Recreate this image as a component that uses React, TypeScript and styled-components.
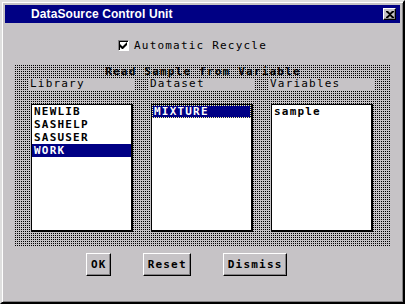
import React from 'react';
import styled, { createGlobalStyle } from 'styled-components';

const GlobalStyle = createGlobalStyle`
  body {
    margin: 0;
    background: #c6c3c6;
    font-family: "DejaVu Sans Mono", "Liberation Mono", monospace;
  }
`;

const face = '#c6c3c6';
const navy = '#000084';

// the dialog uses a bitmap mono font: ~7.8px per cell
const mono = `
  font-size: 11px;
  letter-spacing: 1.2px;
`;

const Window = styled.div`
  width: 405px;
  height: 304px;
  box-sizing: border-box;
  background: ${face};
  border: 2px solid;
  border-color: #dfdfdf #000 #000 #dfdfdf;
  box-shadow: inset 1px 1px #fff, inset -1px -1px #848284;
  padding: 3px;
  display: flex;
  flex-direction: column;
`;

const TitleBar = styled.div`
  height: 18px;
  background: ${navy};
  display: flex;
  align-items: center;
  justify-content: space-between;
  padding: 0 4px 0 26px;
`;

const Title = styled.span`
  font-family: "Liberation Sans", Arial, sans-serif;
  font-weight: bold;
  font-size: 12px;
  color: #fff;
  letter-spacing: 0.1px;
`;

const CloseButton = styled.div`
  width: 13px;
  height: 12px;
  box-sizing: border-box;
  background: ${face};
  border: 1px solid;
  border-color: #fff #000 #000 #fff;
  box-shadow: inset -1px -1px #848284;
  display: flex;
  align-items: center;
  justify-content: center;
`;

const CheckRow = styled.div`
  margin-top: 16px;
  height: 12px;
  padding-left: 113px;
  display: flex;
  align-items: center;
  gap: 5px;
`;

const CheckBox = styled.div`
  width: 11px;
  height: 11px;
  box-sizing: border-box;
  background: #fff;
  border: 1px solid;
  border-color: #848284 #fff #fff #848284;
  box-shadow: inset 1px 1px #000;
  display: flex;
  align-items: center;
  justify-content: center;
`;

const Label = styled.span`
  ${mono}
  line-height: 13px;
  color: #000;
  white-space: pre;
`;

const Group = styled.div`
  margin: 14px 0 0 10px;
  width: 376px;
  height: 182px;
  box-sizing: border-box;
  padding: 0 16px 15px 14px;
  background-color: #000;
  background-image: linear-gradient(90deg, transparent 1px, ${face} 1px),
    linear-gradient(transparent 1px, ${face} 1px);
  background-size: 2px 2px;
  display: flex;
  flex-direction: column;
`;

const GroupTitle = styled.div`
  height: 13px;
  text-align: center;
  ${mono}
  line-height: 13px;
  font-weight: bold;
  padding-left: 2px;
`;

const Columns = styled.div`
  display: flex;
  gap: 14px;
`;

const Column = styled.div`
  width: 106px;
  display: flex;
  flex-direction: column;
`;

const Header = styled.div`
  height: 12px;
  background: ${face};
  padding-left: 1px;
  ${mono}
  line-height: 12px;
`;

const ListBox = styled.div`
  margin: 14px 2px 0;
  height: 128px;
  box-sizing: border-box;
  background: #fff;
  border: solid #000;
  border-width: 1px 2px 2px 1px;
  display: flex;
  flex-direction: column;
`;

const Item = styled.div<{ $selected?: boolean; $focus?: boolean }>`
  height: 13px;
  box-sizing: border-box;
  padding-left: 2px;
  ${mono}
  line-height: 13px;
  font-weight: bold;
  color: ${p => (p.$selected ? '#fff' : '#000')};
  background: ${p => (p.$selected ? navy : 'transparent')};
  outline: ${p => (p.$focus ? '1px dotted #ffff9c' : 'none')};
  outline-offset: -1px;
`;

const ButtonRow = styled.div`
  margin-top: 6px;
  padding-left: 81px;
  display: flex;
  gap: 32px;
`;

const Button = styled.div`
  height: 23px;
  box-sizing: border-box;
  padding: 0 3px 0 4px;
  background: ${face};
  border: 1px solid;
  border-color: #fff #000 #000 #fff;
  box-shadow: inset -1px -1px #848284;
  display: flex;
  align-items: center;
  ${mono}
  font-weight: bold;
`;

const columns = [
  { label: 'Library', items: ['NEWLIB', 'SASHELP', 'SASUSER', 'WORK'], selected: 3, focus: false },
  { label: 'Dataset', items: ['MIXTURE'], selected: 0, focus: true },
  { label: 'Variables', items: ['sample'], selected: -1, focus: false },
];

export default function App() {
  return (
    <>
      <GlobalStyle />
      <Window>
        <TitleBar>
          <Title>DataSource Control Unit</Title>
          <CloseButton>
            <svg width="8" height="7" viewBox="0 0 8 7">
              <path d="M0 0h2l2 2 2-2h2v1L5 3.5 8 6v1H6L4 5 2 7H0V6l3-2.5L0 1z" fill="#000" />
            </svg>
          </CloseButton>
        </TitleBar>
        <CheckRow>
          <CheckBox>
            <svg width="7" height="7" viewBox="0 0 7 7">
              <path d="M0 2v3l2 2h1l4-4V0L2.5 4.5z" fill="#000" />
            </svg>
          </CheckBox>
          <Label>Automatic Recycle</Label>
        </CheckRow>
        <Group>
          <GroupTitle>Read Sample from Variable</GroupTitle>
          <Columns>
            {columns.map(c => (
              <Column key={c.label}>
                <Header>{c.label}</Header>
                <ListBox>
                  {c.items.map((it, i) => (
                    <Item key={it} $selected={i === c.selected} $focus={c.focus && i === c.selected}>
                      {it}
                    </Item>
                  ))}
                </ListBox>
              </Column>
            ))}
          </Columns>
        </Group>
        <ButtonRow>
          <Button>OK</Button>
          <Button>Reset</Button>
          <Button>Dismiss</Button>
        </ButtonRow>
      </Window>
    </>
  );
}
